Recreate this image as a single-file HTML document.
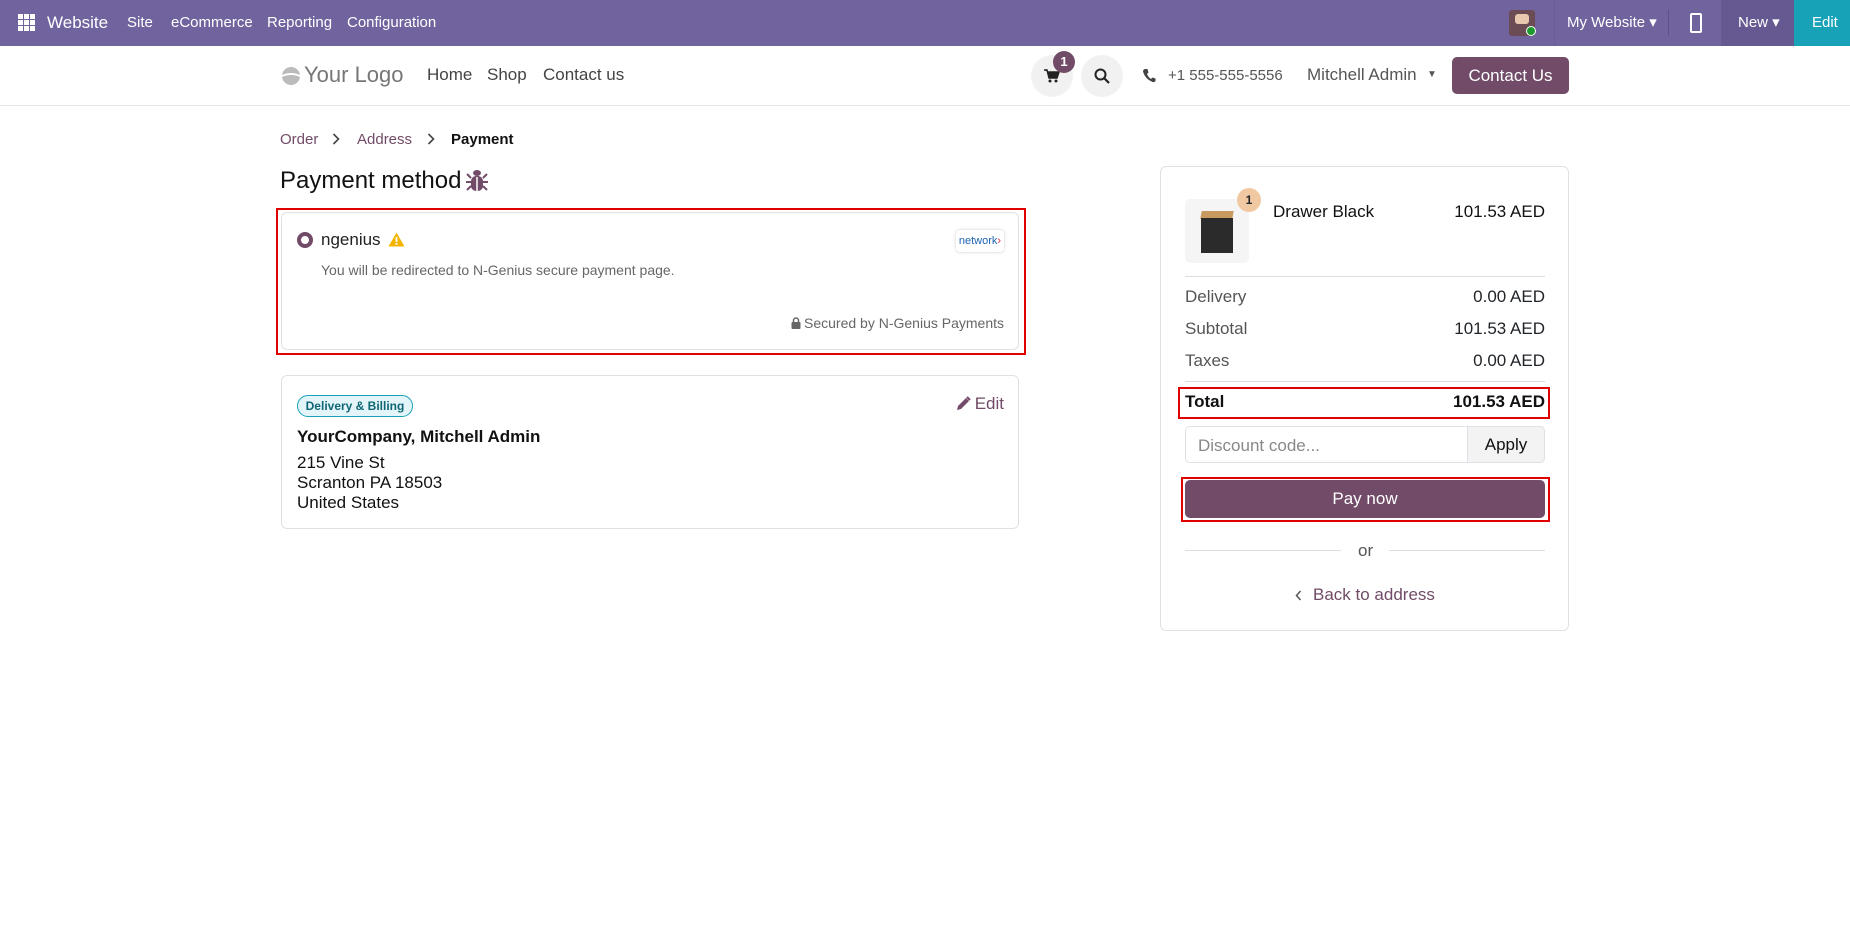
<!DOCTYPE html>
<html><head><meta charset="utf-8">
<style>
*{box-sizing:border-box;margin:0;padding:0}
body{width:1850px;height:932px;background:#fff;font-family:"Liberation Sans",Arial,sans-serif;color:#212529;position:relative;overflow:hidden}
.a{position:absolute;white-space:nowrap}
.top{position:absolute;left:0;top:0;width:1850px;height:46px;background:#71639e;color:#fff;font-size:15px}
.top .a{top:0;line-height:46px}
.hdr{position:absolute;left:0;top:46px;width:1850px;height:60px;border-bottom:1px solid #e6e6e6;background:#fff}
.card{position:absolute;border:1px solid #dee2e6;border-radius:6px;background:#fff}
.red{position:absolute;border:2px solid #e00000}
.row{position:absolute;left:1185px;width:360px;font-size:17px;display:flex;justify-content:space-between}
</style></head><body>
<div class="top">
  <svg class="a" style="left:18px;top:14px" width="17" height="17" viewBox="0 0 17 17" fill="#fff"><rect x="0" y="0" width="5" height="5"/><rect x="6" y="0" width="5" height="5"/><rect x="12" y="0" width="5" height="5"/><rect x="0" y="6" width="5" height="5"/><rect x="6" y="6" width="5" height="5"/><rect x="12" y="6" width="5" height="5"/><rect x="0" y="12" width="5" height="5"/><rect x="6" y="12" width="5" height="5"/><rect x="12" y="12" width="5" height="5"/></svg>
  <span class="a" style="left:47px;font-size:17px">Website</span>
  <span class="a" style="left:127px">Site</span>
  <span class="a" style="left:171px">eCommerce</span>
  <span class="a" style="left:267px">Reporting</span>
  <span class="a" style="left:347px">Configuration</span>
  <div class="a" style="left:1509px;top:10px;width:26px;height:26px;background:#6b4c55;border-radius:3px"></div>
  <div class="a" style="left:1515px;top:14px;width:14px;height:10px;background:#e8c9b0;border-radius:3px"></div>
  <div class="a" style="left:1526px;top:26px;width:10px;height:10px;background:#1a9b2c;border-radius:50%;border:1px solid #fff"></div>
  <div class="a" style="left:1554px;top:0;width:1px;height:46px;background:#6a5c94"></div>
  <span class="a" style="left:1567px;font-size:15px">My Website ▾</span>
  <div class="a" style="left:1668px;top:10px;width:1px;height:26px;background:#5f5287"></div>
  <div class="a" style="left:1690px;top:13px;width:12px;height:20px;border:2px solid #fff;border-radius:2px"></div>
  <div class="a" style="left:1721px;top:0;width:73px;height:46px;background:#665891"></div>
  <span class="a" style="left:1738px">New ▾</span>
  <div class="a" style="left:1794px;top:0;width:56px;height:46px;background:#17a2b8"></div>
  <span class="a" style="left:1812px">Edit</span>
</div>
<div class="hdr">
  <svg class="a" style="left:281px;top:20px" width="20" height="20" viewBox="0 0 20 20"><circle cx="10" cy="10" r="9" fill="#bbb"/><path d="M1 9 Q10 5 19 9 L19 11 Q10 7 1 11Z" fill="#fff"/></svg>
  <span class="a" style="left:304px;top:16px;font-size:22px;color:#777">Your Logo</span>
  <span class="a" style="left:427px;top:19px;font-size:17px;color:#444">Home</span>
  <span class="a" style="left:487px;top:19px;font-size:17px;color:#444">Shop</span>
  <span class="a" style="left:543px;top:19px;font-size:17px;color:#444">Contact us</span>
  <div class="a" style="left:1031px;top:9px;width:42px;height:42px;border-radius:50%;background:#f1f1f1"></div>
  <svg class="a" style="left:1044px;top:23px" width="16" height="14" viewBox="0 0 16 14"><path d="M0 1h3l2 8h8l2-6H4" fill="#222" stroke="#222" stroke-width="1.5"/><circle cx="6" cy="12" r="1.5" fill="#222"/><circle cx="12" cy="12" r="1.5" fill="#222"/></svg>
  <div class="a" style="left:1053px;top:5px;width:22px;height:22px;border-radius:50%;background:#714b67;color:#fff;font-size:13px;text-align:center;line-height:22px;font-weight:bold">1</div>
  <div class="a" style="left:1081px;top:9px;width:42px;height:42px;border-radius:50%;background:#f1f1f1"></div>
  <svg class="a" style="left:1094px;top:22px" width="16" height="16" viewBox="0 0 16 16"><circle cx="6.5" cy="6.5" r="5" fill="none" stroke="#222" stroke-width="2"/><path d="M10 10l5 5" stroke="#222" stroke-width="2.2"/></svg>
  <svg class="a" style="left:1142px;top:22px" width="14" height="15" viewBox="0 0 14 15"><path d="M3 1 L5.5 1 L6.5 4.5 L5 6 Q6.5 9.5 9 11 L10.5 9.5 L13.5 10.5 L13.5 13 Q12.5 14.5 10.5 14 Q3 11 1 3.5 Q1 1.5 3 1Z" fill="#444"/></svg>
  <span class="a" style="left:1168px;top:21px;font-size:15px;color:#555">+1 555-555-5556</span>
  <span class="a" style="left:1307px;top:19px;font-size:17px;color:#555">Mitchell Admin</span>
  <span class="a" style="left:1427px;top:23px;font-size:10px;color:#555">▼</span>
  <div class="a" style="left:1452px;top:11px;width:117px;height:37px;background:#714b67;border-radius:5px;color:#fff;font-size:17px;text-align:center;line-height:37px">Contact Us</div>
</div>

<span class="a" style="left:280px;top:131px;font-size:15px;color:#714b67">Order</span>
<svg class="a" style="left:332px;top:133px" width="8" height="12" viewBox="0 0 8 12"><path d="M1.5 1 L6.5 6 L1.5 11" fill="none" stroke="#444" stroke-width="1.6"/></svg>
<span class="a" style="left:357px;top:131px;font-size:15px;color:#714b67">Address</span>
<svg class="a" style="left:427px;top:133px" width="8" height="12" viewBox="0 0 8 12"><path d="M1.5 1 L6.5 6 L1.5 11" fill="none" stroke="#444" stroke-width="1.6"/></svg>
<span class="a" style="left:451px;top:131px;font-size:15px;font-weight:bold;color:#111">Payment</span>
<span class="a" style="left:280px;top:167px;font-size:24px;color:#111">Payment method</span>
<svg class="a" style="left:466px;top:168px" width="22" height="24" viewBox="0 0 22 24"><g fill="#714b67"><ellipse cx="11" cy="5" rx="4" ry="3"/><rect x="5" y="8" width="12" height="15" rx="5"/><path d="M1 6 L5 10 M21 6 L17 10 M0 14 L5 14 M22 14 L17 14 M1 22 L5 18 M21 22 L17 18" stroke="#714b67" stroke-width="2"/></g><path d="M11 9 V23" stroke="#fff" stroke-width="1.5"/></svg>

<div class="card" style="left:281px;top:212px;width:738px;height:138px"></div>
<div class="red" style="left:276px;top:208px;width:750px;height:147px"></div>
<div class="a" style="left:297px;top:232px;width:16px;height:16px;border-radius:50%;border:4.5px solid #714b67"></div>
<span class="a" style="left:321px;top:230px;font-size:17px;color:#222">ngenius</span>
<svg class="a" style="left:388px;top:232px" width="17" height="15" viewBox="0 0 17 15"><path d="M8.5 0.5 L16.5 14.5 H0.5Z" fill="#f4b400"/><rect x="7.6" y="5" width="1.8" height="5" fill="#fff"/><rect x="7.6" y="11" width="1.8" height="1.8" fill="#fff"/></svg>
<div class="a" style="left:956px;top:230px;width:48px;height:22px;border-radius:4px;box-shadow:0 0 3px #ccc;font-size:11px;color:#1f64b4;text-align:center;line-height:22px">network<span style="color:#e0314a">›</span></div>
<span class="a" style="left:321px;top:262px;font-size:14px;color:#666">You will be redirected to N-Genius secure payment page.</span>
<span class="a" style="right:846px;top:315px;font-size:14px;color:#666"><svg width="10" height="12" viewBox="0 0 10 12" style="vertical-align:-1px;margin-right:3px"><path d="M2.5 5 V3.5 a2.5 2.5 0 0 1 5 0 V5" fill="none" stroke="#666" stroke-width="1.5"/><rect x="0.5" y="5" width="9" height="7" rx="1" fill="#666"/></svg>Secured by N-Genius Payments</span>

<div class="card" style="left:281px;top:375px;width:738px;height:154px"></div>
<div class="a" style="left:297px;top:395px;width:116px;height:22px;border:1px solid #17a2b8;background:#e3f5f8;border-radius:11px;font-size:12px;font-weight:bold;color:#0f6674;text-align:center;line-height:20px">Delivery &amp; Billing</div>
<svg class="a" style="left:956px;top:396px" width="15" height="15" viewBox="0 0 15 15"><path d="M1 14 L2 10 L10 2 L13 5 L5 13Z" fill="#714b67"/><path d="M11 1 L14 4" stroke="#714b67" stroke-width="2"/></svg>
<span class="a" style="right:846px;top:394px;font-size:17px;color:#714b67">Edit</span>
<span class="a" style="left:297px;top:427px;font-size:17px;font-weight:bold;color:#111">YourCompany, Mitchell Admin</span>
<div class="a" style="left:297px;top:453px;font-size:17px;line-height:20px;color:#111">215 Vine St<br>Scranton PA 18503<br>United States</div>

<div class="card" style="left:1160px;top:166px;width:409px;height:465px"></div>
<div class="a" style="left:1185px;top:199px;width:64px;height:64px;background:#f5f5f5;border-radius:5px"></div>
<div class="a" style="left:1201px;top:211px;width:32px;height:8px;background:#c89a60;transform:skewX(-10deg)"></div>
<div class="a" style="left:1201px;top:218px;width:32px;height:35px;background:#2b2b2b"></div>
<div class="a" style="left:1237px;top:188px;width:24px;height:24px;border-radius:50%;background:#f0c9a2;font-size:12px;font-weight:bold;text-align:center;line-height:24px">1</div>
<span class="a" style="left:1273px;top:202px;font-size:17px;color:#111">Drawer Black</span>
<span class="a" style="right:305px;top:202px;font-size:17px;color:#111">101.53 AED</span>
<div class="a" style="left:1185px;top:276px;width:360px;height:1px;background:#ddd"></div>
<div class="row" style="top:287px"><span style="color:#555">Delivery</span><span>0.00 AED</span></div>
<div class="row" style="top:319px"><span style="color:#555">Subtotal</span><span>101.53 AED</span></div>
<div class="row" style="top:351px"><span style="color:#555">Taxes</span><span>0.00 AED</span></div>
<div class="a" style="left:1185px;top:381px;width:360px;height:1px;background:#ddd"></div>
<div class="row" style="top:392px;font-weight:bold;color:#111"><span>Total</span><span>101.53 AED</span></div>
<div class="red" style="left:1178px;top:387px;width:372px;height:32px"></div>
<div class="a" style="left:1185px;top:426px;width:360px;height:37px;border:1px solid #dee2e6;border-radius:5px"></div>
<span class="a" style="left:1198px;top:436px;font-size:17px;color:#888">Discount code...</span>
<div class="a" style="left:1467px;top:426px;width:78px;height:37px;border:1px solid #dee2e6;border-radius:0 5px 5px 0;background:#f3f3f3;font-size:17px;text-align:center;line-height:35px;color:#111">Apply</div>
<div class="a" style="left:1185px;top:480px;width:360px;height:38px;background:#714b67;border-radius:5px;color:#fff;font-size:17px;text-align:center;line-height:38px">Pay now</div>
<div class="red" style="left:1181px;top:477px;width:369px;height:45px"></div>
<div class="a" style="left:1185px;top:550px;width:156px;height:1px;background:#ddd"></div>
<div class="a" style="left:1389px;top:550px;width:156px;height:1px;background:#ddd"></div>
<span class="a" style="left:1358px;top:541px;font-size:17px;color:#555">or</span>
<svg class="a" style="left:1295px;top:590px" width="7" height="11" viewBox="0 0 7 11"><path d="M5.5 1 L1.5 5.5 L5.5 10" fill="none" stroke="#555" stroke-width="1.5"/></svg>
<span class="a" style="left:1313px;top:585px;font-size:17px;color:#714b67">Back to address</span>
</body></html>
